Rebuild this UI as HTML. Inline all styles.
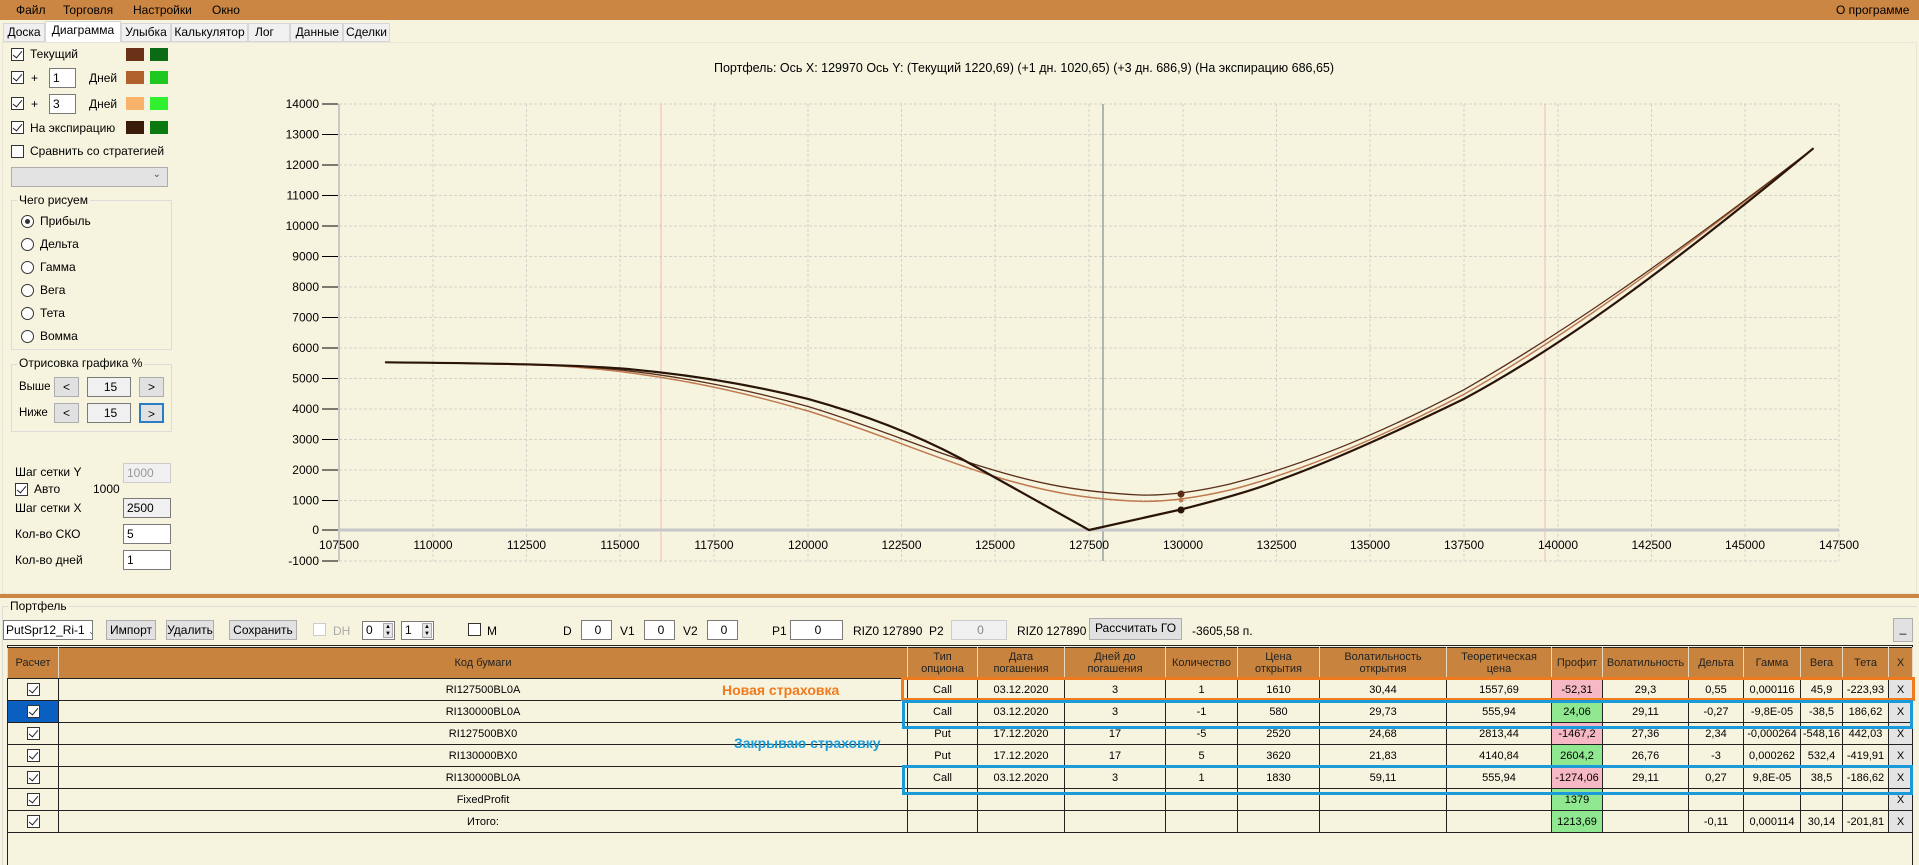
<!DOCTYPE html>
<html><head><meta charset="utf-8"><style>
*{box-sizing:border-box;margin:0;padding:0}
body{width:1919px;height:865px;overflow:hidden;background:#f6f4df;font-family:"Liberation Sans",sans-serif;font-size:12px;color:#000;position:relative}
.a{position:absolute;white-space:nowrap}
.menu{left:0;top:0;width:1919px;height:20px;background:#cc8644}
.menu span{position:absolute;top:3px;font-size:12px}
.tab{position:absolute;top:23px;height:19px;background:#f0f0f0;border:1px solid #d6d6d6;font-size:12px;text-align:center;line-height:17px}
.cb{position:absolute;width:13px;height:13px;border:1px solid #333;background:#fff}
.cb.c::after{content:"";position:absolute;left:3px;top:0px;width:4px;height:8px;border:solid #222;border-width:0 1.3px 1.3px 0;transform:rotate(40deg)}
.sw{position:absolute;width:18px;height:13px}
.rd{position:absolute;width:13px;height:13px;border:1px solid #333;border-radius:50%;background:#fff}
.inp{position:absolute;background:#fff;border:1px solid #7a7a7a;height:20px;line-height:18px;padding-left:3px}
.btn{position:absolute;background:#e1e1e1;border:1px solid #adadad;text-align:center;line-height:18px;height:20px}
.grp{position:absolute;border:1px solid #dcdcdc}
.gl{position:absolute;background:#f6f4df;padding:0 2px;top:-8px;left:5px}
table{position:absolute;left:7px;top:647px;border-collapse:collapse;table-layout:fixed;font-size:11px}
td,th{border:1px solid #222;text-align:center;height:22px;overflow:hidden;white-space:nowrap;padding:0}
th{background:#c8843f;font-weight:normal;height:31px;line-height:12px;border-color:#e8d8c0;border-top:1px solid #222;border-bottom:1px solid #222;color:#222}
td .cb{position:relative;display:inline-block;vertical-align:middle}
.pk{background:#f6b8c4}.gr{background:#8fe88f}
</style></head><body>
<div class="a menu">
<span style="left:16px">Файл</span><span style="left:63px">Торговля</span><span style="left:133px">Настройки</span><span style="left:212px">Окно</span><span style="left:1836px">О программе</span>
</div>
<div class="tab" style="left:3px;width:42px">Доска</div>
<div class="tab" style="left:45px;width:76px;background:#fff;top:21px;height:22px;border-bottom:none">Диаграмма</div>
<div class="tab" style="left:121px;width:50px">Улыбка</div>
<div class="tab" style="left:171px;width:77px">Калькулятор</div>
<div class="tab" style="left:248px;width:42px;text-align:left;padding-left:6px">Лог</div>
<div class="tab" style="left:290px;width:53px;text-align:right;padding-right:3px">Данные</div>
<div class="tab" style="left:343px;width:47px">Сделки</div>
<div class="a" style="left:2px;top:42px;width:1915px;height:552px;border:1px solid #e8e6d6"></div>

<div class="cb c" style="left:11px;top:48px"></div><div class="a" style="left:30px;top:47px">Текущий</div>
<div class="sw" style="left:126px;top:48px;background:#6b3217"></div><div class="sw" style="left:150px;top:48px;background:#0b6b14"></div>
<div class="cb c" style="left:11px;top:71px"></div><div class="a" style="left:31px;top:71px">+</div>
<div class="inp" style="left:49px;top:68px;width:27px">1</div><div class="a" style="left:89px;top:71px">Дней</div>
<div class="sw" style="left:126px;top:71px;background:#b0602a"></div><div class="sw" style="left:150px;top:71px;background:#1ec81e"></div>
<div class="cb c" style="left:11px;top:97px"></div><div class="a" style="left:31px;top:97px">+</div>
<div class="inp" style="left:49px;top:94px;width:27px">3</div><div class="a" style="left:89px;top:97px">Дней</div>
<div class="sw" style="left:126px;top:97px;background:#f8b26a"></div><div class="sw" style="left:150px;top:97px;background:#30f030"></div>
<div class="cb c" style="left:11px;top:121px"></div><div class="a" style="left:30px;top:121px">На экспирацию</div>
<div class="sw" style="left:126px;top:121px;background:#3a1a08"></div><div class="sw" style="left:150px;top:121px;background:#0a7a10"></div>
<div class="cb" style="left:11px;top:145px"></div><div class="a" style="left:30px;top:144px">Сравнить со стратегией</div>
<div class="a" style="left:11px;top:167px;width:157px;height:20px;background:#e3e3e3;border:1px solid #adadad"><span style="position:absolute;right:6px;top:1px;font-size:10px;color:#555">&#8964;</span></div>
<div class="grp" style="left:11px;top:200px;width:161px;height:150px"><span class="gl">Чего рисуем</span></div>
<div class="rd" style="left:21px;top:215px"><div style="position:absolute;left:3px;top:3px;width:5px;height:5px;border-radius:50%;background:#333"></div></div><div class="a" style="left:40px;top:214px">Прибыль</div>
<div class="rd" style="left:21px;top:238px"></div><div class="a" style="left:40px;top:237px">Дельта</div>
<div class="rd" style="left:21px;top:261px"></div><div class="a" style="left:40px;top:260px">Гамма</div>
<div class="rd" style="left:21px;top:284px"></div><div class="a" style="left:40px;top:283px">Вега</div>
<div class="rd" style="left:21px;top:307px"></div><div class="a" style="left:40px;top:306px">Тета</div>
<div class="rd" style="left:21px;top:330px"></div><div class="a" style="left:40px;top:329px">Вомма</div>
<div class="grp" style="left:11px;top:364px;width:161px;height:68px"><span class="gl" style="top:-9px">Отрисовка графика %</span></div>
<div class="a" style="left:19px;top:381px;font-size:11.5px">Выше</div>
<div class="btn" style="left:54px;top:377px;width:25px">&lt;</div><div class="inp" style="left:87px;top:377px;width:44px;text-align:center;background:#f0f0f0">15</div><div class="btn" style="left:139px;top:377px;width:25px">&gt;</div>
<div class="a" style="left:19px;top:407px;font-size:11.5px">Ниже</div>
<div class="btn" style="left:54px;top:403px;width:25px">&lt;</div><div class="inp" style="left:87px;top:403px;width:44px;text-align:center;background:#f0f0f0">15</div><div class="btn" style="left:139px;top:403px;width:25px;border:2px solid #2a7cc7">&gt;</div>
<div class="a" style="left:15px;top:465px">Шаг сетки Y</div><div class="inp" style="left:123px;top:463px;width:48px;background:#f0f0f0;color:#999;border-color:#ccc">1000</div>
<div class="cb c" style="left:15px;top:483px"></div><div class="a" style="left:34px;top:482px">Авто</div><div class="a" style="left:93px;top:482px">1000</div>
<div class="a" style="left:15px;top:501px">Шаг сетки X</div><div class="inp" style="left:123px;top:498px;width:48px;background:#f0f0f0">2500</div>
<div class="a" style="left:15px;top:527px">Кол-во СКО</div><div class="inp" style="left:123px;top:524px;width:48px">5</div>
<div class="a" style="left:15px;top:553px">Кол-во дней</div><div class="inp" style="left:123px;top:550px;width:48px">1</div>

<svg class="a" style="left:0;top:0" width="1919" height="600" font-family="Liberation Sans" font-size="12">
<text x="714" y="72" font-size="12.5">Портфель: Ось X: 129970 Ось Y:  (Текущий 1220,69)  (+1 дн. 1020,65)  (+3 дн. 686,9)  (На экспирацию 686,65)</text>
<g stroke="#d2d2c8" stroke-dasharray="3,2" stroke-width="1">
<line x1="339" y1="104" x2="1839" y2="104"/><line x1="339" y1="134.5" x2="1839" y2="134.5"/><line x1="339" y1="165" x2="1839" y2="165"/><line x1="339" y1="195.5" x2="1839" y2="195.5"/><line x1="339" y1="226" x2="1839" y2="226"/><line x1="339" y1="256.5" x2="1839" y2="256.5"/><line x1="339" y1="287" x2="1839" y2="287"/><line x1="339" y1="317.5" x2="1839" y2="317.5"/><line x1="339" y1="348" x2="1839" y2="348"/><line x1="339" y1="378.5" x2="1839" y2="378.5"/><line x1="339" y1="409" x2="1839" y2="409"/><line x1="339" y1="439.5" x2="1839" y2="439.5"/><line x1="339" y1="470" x2="1839" y2="470"/><line x1="339" y1="500.5" x2="1839" y2="500.5"/><line x1="339" y1="561" x2="1839" y2="561"/>
<line x1="433" y1="104" x2="433" y2="561"/><line x1="526.5" y1="104" x2="526.5" y2="561"/><line x1="620" y1="104" x2="620" y2="561"/><line x1="714" y1="104" x2="714" y2="561"/><line x1="808" y1="104" x2="808" y2="561"/><line x1="901.5" y1="104" x2="901.5" y2="561"/><line x1="995" y1="104" x2="995" y2="561"/><line x1="1089" y1="104" x2="1089" y2="561"/><line x1="1183" y1="104" x2="1183" y2="561"/><line x1="1276.5" y1="104" x2="1276.5" y2="561"/><line x1="1370" y1="104" x2="1370" y2="561"/><line x1="1464" y1="104" x2="1464" y2="561"/><line x1="1558" y1="104" x2="1558" y2="561"/><line x1="1651.5" y1="104" x2="1651.5" y2="561"/><line x1="1745" y1="104" x2="1745" y2="561"/><line x1="1839" y1="104" x2="1839" y2="561"/>
</g>
<line x1="661" y1="104" x2="661" y2="561" stroke="#f0b8b8"/>
<line x1="1545" y1="104" x2="1545" y2="561" stroke="#f0b8b8"/>
<line x1="1103" y1="104" x2="1103" y2="561" stroke="#9aa0a0" stroke-width="1.5"/>
<line x1="339" y1="104" x2="339" y2="561" stroke="#c8c8c8" stroke-width="2"/>
<line x1="339" y1="530" x2="1839" y2="530" stroke="#c8c8c8" stroke-width="3"/>
<g stroke="#000"><line x1="322" y1="104" x2="338" y2="104"/><line x1="322" y1="134.5" x2="338" y2="134.5"/><line x1="322" y1="165" x2="338" y2="165"/><line x1="322" y1="195.5" x2="338" y2="195.5"/><line x1="322" y1="226" x2="338" y2="226"/><line x1="322" y1="256.5" x2="338" y2="256.5"/><line x1="322" y1="287" x2="338" y2="287"/><line x1="322" y1="317.5" x2="338" y2="317.5"/><line x1="322" y1="348" x2="338" y2="348"/><line x1="322" y1="378.5" x2="338" y2="378.5"/><line x1="322" y1="409" x2="338" y2="409"/><line x1="322" y1="439.5" x2="338" y2="439.5"/><line x1="322" y1="470" x2="338" y2="470"/><line x1="322" y1="500.5" x2="338" y2="500.5"/><line x1="322" y1="530" x2="338" y2="530"/><line x1="322" y1="561" x2="338" y2="561"/></g>
<g text-anchor="end"><text x="319" y="108">14000</text><text x="319" y="138.5">13000</text><text x="319" y="169">12000</text><text x="319" y="199.5">11000</text><text x="319" y="230">10000</text><text x="319" y="260.5">9000</text><text x="319" y="291">8000</text><text x="319" y="321.5">7000</text><text x="319" y="352">6000</text><text x="319" y="382.5">5000</text><text x="319" y="413">4000</text><text x="319" y="443.5">3000</text><text x="319" y="474">2000</text><text x="319" y="504.5">1000</text><text x="319" y="534">0</text><text x="319" y="565">-1000</text></g>
<g text-anchor="middle"><text x="339" y="549">107500</text><text x="433" y="549">110000</text><text x="526.5" y="549">112500</text><text x="620" y="549">115000</text><text x="714" y="549">117500</text><text x="808" y="549">120000</text><text x="901.5" y="549">122500</text><text x="995" y="549">125000</text><text x="1089" y="549">127500</text><text x="1183" y="549">130000</text><text x="1276.5" y="549">132500</text><text x="1370" y="549">135000</text><text x="1464" y="549">137500</text><text x="1558" y="549">140000</text><text x="1651.5" y="549">142500</text><text x="1745" y="549">145000</text><text x="1839" y="549">147500</text></g>
<g fill="none" stroke-linejoin="round" stroke-linecap="round">
<path d="M385.9,362.3 C450,363 520,364 560,366 C640,371 720,385 808,411 C870,430 940,460 995,476.6 C1040,490 1080,499 1140,501.3 C1170,502 1200,497 1230,490 C1300,472 1380,438 1464,394.3 C1560,339.4 1660,268 1812.8,148.8" stroke="#c07a50" stroke-width="1.5"/>
<path d="M385.9,362.3 C450,363 520,364 560,365.5 C640,369 720,382 808,406.5 C870,425 940,455 995,470.5 C1040,484 1080,492 1140,495 C1170,496 1200,491 1230,484 C1300,466 1380,434 1464,389.7 C1560,334.8 1660,266 1812.8,148.8" stroke="#5a2e18" stroke-width="1.3"/>
<path d="M385.9,362.3 C460,363 560,364 620,368.4 C700,375 760,387 808,398.9 C870,416 920,437 960,458 C1000,480 1040,503 1089,530 L1183,509 C1230,497 1260,488 1276.5,481 C1330,462 1400,430 1464,398.9 C1560,347 1660,275 1812.8,148.8" stroke="#2a1408" stroke-width="2.2"/>
</g>
<circle cx="1181" cy="494" r="3.5" fill="#5a2e18"/><circle cx="1181" cy="500" r="2.5" fill="#c07a50"/><circle cx="1181" cy="510" r="3.5" fill="#2a1408"/>
</svg>

<div class="a" style="left:0;top:594px;width:1919px;height:4px;background:#cc8644"></div>
<div class="a" style="left:2px;top:606px;width:1915px;height:259px;border-top:1px solid #dcdcdc;border-left:1px solid #dcdcdc"></div>
<div class="a" style="left:8px;top:599px;background:#f6f4df;padding:0 2px">Портфель</div>
<div class="a" style="left:3px;top:620px;width:90px;height:20px;background:#fff;border:1px solid #7a7a7a;padding:2px 2px;overflow:hidden">PutSpr12_Ri-1 <span style="font-size:9px;color:#555">&#8964;</span></div>
<div class="btn" style="left:106px;top:620px;width:50px">Импорт</div>
<div class="btn" style="left:166px;top:620px;width:48px">Удалить</div>
<div class="btn" style="left:229px;top:620px;width:68px">Сохранить</div>
<div class="a" style="left:313px;top:623px;width:13px;height:13px;border:1px solid #ccc;background:#fff"></div><div class="a" style="left:333px;top:624px;color:#aaa">DH</div>
<div class="inp" style="left:362px;top:621px;width:33px;height:19px;line-height:17px">0<span style="position:absolute;right:1px;top:1px;width:10px;height:15px;background:#e6e6e6;border:1px solid #aaa;font-size:6px;line-height:7px;text-align:center">▲<br>▼</span></div>
<div class="inp" style="left:401px;top:621px;width:33px;height:19px;line-height:17px">1<span style="position:absolute;right:1px;top:1px;width:10px;height:15px;background:#e6e6e6;border:1px solid #aaa;font-size:6px;line-height:7px;text-align:center">▲<br>▼</span></div>
<div class="a" style="left:468px;top:623px;width:13px;height:13px;border:1px solid #333;background:#fff"></div><div class="a" style="left:487px;top:624px">M</div>
<div class="a" style="left:563px;top:624px">D</div><div class="inp" style="left:581px;top:620px;width:31px;text-align:center">0</div>
<div class="a" style="left:620px;top:624px">V1</div><div class="inp" style="left:644px;top:620px;width:31px;text-align:center">0</div>
<div class="a" style="left:683px;top:624px">V2</div><div class="inp" style="left:707px;top:620px;width:31px;text-align:center">0</div>
<div class="a" style="left:772px;top:624px">P1</div><div class="inp" style="left:790px;top:620px;width:53px;text-align:center">0</div>
<div class="a" style="left:853px;top:624px">RIZ0 127890</div>
<div class="a" style="left:929px;top:624px">P2</div><div class="inp" style="left:951px;top:620px;width:56px;text-align:center;background:#f0f0f0;border-color:#ccc;color:#888">0</div>
<div class="a" style="left:1017px;top:624px">RIZ0 127890</div>
<div class="btn" style="left:1089px;top:618px;width:93px;height:22px">Рассчитать ГО</div>
<div class="a" style="left:1192px;top:624px">-3605,58 п.</div>
<div class="btn" style="left:1893px;top:618px;width:20px;height:24px">_</div>

<div class="a" style="left:7px;top:645px;width:1906px;height:220px;border:1px solid #222;border-bottom:none"></div>
<table>
<colgroup><col style="width:51px"><col style="width:849px"><col style="width:70px"><col style="width:87px"><col style="width:101px"><col style="width:72px"><col style="width:82px"><col style="width:127px"><col style="width:105px"><col style="width:51px"><col style="width:86px"><col style="width:55px"><col style="width:57px"><col style="width:42px"><col style="width:46px"><col style="width:24px"></colgroup>
<tr><th>Расчет</th><th>Код бумаги</th><th>Тип<br>опциона</th><th>Дата<br>погашения</th><th>Дней до<br>погашения</th><th>Количество</th><th>Цена<br>открытия</th><th>Волатильность<br>открытия</th><th>Теоретическая<br>цена</th><th>Профит</th><th>Волатильность</th><th>Дельта</th><th>Гамма</th><th>Вега</th><th>Тета</th><th>X</th></tr>
<tr><td><span class="cb c"></span></td><td>RI127500BL0A</td><td>Call</td><td>03.12.2020</td><td>3</td><td>1</td><td>1610</td><td>30,44</td><td>1557,69</td><td class="pk">-52,31</td><td>29,3</td><td>0,55</td><td>0,000116</td><td>45,9</td><td>-223,93</td><td style="background:#e4e4e4">X</td></tr>
<tr><td style="background:#0a5fc0"><span class="cb c"></span></td><td>RI130000BL0A</td><td>Call</td><td>03.12.2020</td><td>3</td><td>-1</td><td>580</td><td>29,73</td><td>555,94</td><td class="gr">24,06</td><td>29,11</td><td>-0,27</td><td>-9,8E-05</td><td>-38,5</td><td>186,62</td><td style="background:#e4e4e4">X</td></tr>
<tr><td><span class="cb c"></span></td><td>RI127500BX0</td><td>Put</td><td>17.12.2020</td><td>17</td><td>-5</td><td>2520</td><td>24,68</td><td>2813,44</td><td class="pk">-1467,2</td><td>27,36</td><td>2,34</td><td>-0,000264</td><td>-548,16</td><td>442,03</td><td style="background:#e4e4e4">X</td></tr>
<tr><td><span class="cb c"></span></td><td>RI130000BX0</td><td>Put</td><td>17.12.2020</td><td>17</td><td>5</td><td>3620</td><td>21,83</td><td>4140,84</td><td class="gr">2604,2</td><td>26,76</td><td>-3</td><td>0,000262</td><td>532,4</td><td>-419,91</td><td style="background:#e4e4e4">X</td></tr>
<tr><td><span class="cb c"></span></td><td>RI130000BL0A</td><td>Call</td><td>03.12.2020</td><td>3</td><td>1</td><td>1830</td><td>59,11</td><td>555,94</td><td class="pk">-1274,06</td><td>29,11</td><td>0,27</td><td>9,8E-05</td><td>38,5</td><td>-186,62</td><td style="background:#e4e4e4">X</td></tr>
<tr><td><span class="cb c"></span></td><td>FixedProfit</td><td></td><td></td><td></td><td></td><td></td><td></td><td></td><td class="gr">1379</td><td></td><td></td><td></td><td></td><td></td><td style="background:#e4e4e4">X</td></tr>
<tr><td><span class="cb c"></span></td><td>Итого:</td><td></td><td></td><td></td><td></td><td></td><td></td><td></td><td class="gr">1213,69</td><td></td><td>-0,11</td><td>0,000114</td><td>30,14</td><td>-201,81</td><td style="background:#e4e4e4">X</td></tr>
</table>
<div class="a" style="left:901px;top:677px;width:1014px;height:24px;border:3px solid #f07a1e"></div>
<div class="a" style="left:902px;top:700px;width:1011px;height:29px;border:3px solid #1a9ad8"></div>
<div class="a" style="left:902px;top:765px;width:1011px;height:30px;border:3px solid #1a9ad8"></div>
<div class="a" style="left:722px;top:682px;font-size:14px;font-weight:bold;color:#f07a1e">Новая страховка</div>
<div class="a" style="left:734px;top:735px;font-size:14px;font-weight:bold;color:#1a9ad8">Закрываю страховку</div>
</body></html>
